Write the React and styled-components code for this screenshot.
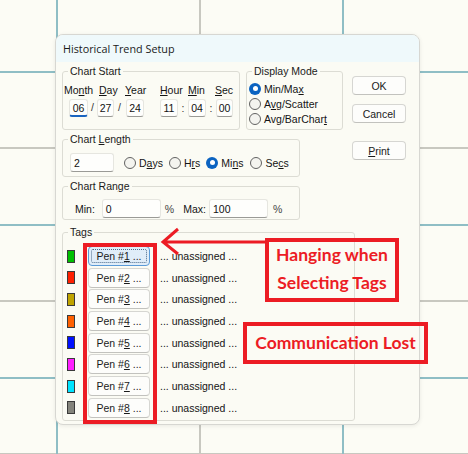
import React from "react";
import styled, { createGlobalStyle, css } from "styled-components";

const GlobalStyle = createGlobalStyle`
  html, body { margin: 0; padding: 0; background: #fcfcf5; }
  body { font-family: "Liberation Sans", Arial, sans-serif; }
`;

const TEAL = "#8fbec5";
const GRAY = "#c8c8c0";
const RED = "#ec1c24";

const Desktop = styled.div`
  position: relative;
  width: 468px;
  height: 454px;
  overflow: hidden;
  box-sizing: border-box;
  padding: 34px 0 0 55px;
  background-color: #fcfcf5;
  background-image:
    repeating-linear-gradient(90deg, transparent 0 56px, ${TEAL} 56px 58px, transparent 58px 286px),
    repeating-linear-gradient(90deg, transparent 0 199px, ${GRAY} 199px 201px, transparent 201px 286px),
    repeating-linear-gradient(180deg, transparent 0 71px, ${TEAL} 71px 73px, transparent 73px 153px),
    repeating-linear-gradient(180deg, transparent 0 147px, ${GRAY} 147px 149px, transparent 149px 153px);
`;

const Dialog = styled.div`
  width: 365px;
  box-sizing: border-box;
  border: 1px solid #d7d7d2;
  border-radius: 8px;
  background: #fbfbf4;
  overflow: hidden;
  box-shadow: 0 1px 4px rgba(0, 0, 0, 0.08);
  font-size: 10.5px;
  color: #141414;
`;

const TitleBar = styled.div`
  height: 27px;
  display: flex;
  align-items: center;
  padding-left: 7px;
  background: #eff9fb;
  font-family: "Open Sans", "Noto Sans", sans-serif;
  font-size: 10.8px;
  color: #1a1a1a;
`;

const Body = styled.div`
  padding: 3px 6px 3px 6px;
`;

const TopSection = styled.div`
  display: flex;
  align-items: flex-start;
`;

const MainCol = styled.div`
  width: 281px;
  display: flex;
  flex-direction: column;
`;

const TopRow = styled.div`
  display: flex;
  gap: 6px;
`;

const ButtonCol = styled.div`
  margin: 11px 0 0 9px;
  display: flex;
  flex-direction: column;
`;

const Group = styled.fieldset`
  margin: ${(p) => p.$mt || 0}px 0 0 0;
  padding: 0;
  min-width: 0;
  width: ${(p) => p.$w}px;
  box-sizing: border-box;
  border: 1px solid #dcdcd4;
  border-radius: 3px;
`;

const Legend = styled.legend`
  margin-left: 5px;
  padding: 0 2px;
  line-height: 13px;
  font-size: 10.5px;
  color: #1a1a1a;
`;

const Acc = styled.span`
  text-decoration: underline;
  text-underline-offset: 1px;
`;

const DateGrid = styled.div`
  display: grid;
  grid-template-columns: 5px 19px 9px 17px 11px 18px 17px 18px 10px 18px 10px 17px;
  grid-template-rows: 13px 18px;
  row-gap: 2px;
  align-items: center;
  padding: 6px 0 12px 1px;
`;

const DateLabel = styled.span`
  grid-row: 1;
  grid-column: ${(p) => p.$col};
  margin-left: ${(p) => p.$ml || 0}px;
  white-space: nowrap;
  line-height: 13px;
`;

const Sep = styled.span`
  grid-row: 2;
  grid-column: ${(p) => p.$col};
  text-align: center;
  color: #333;
  ${(p) => p.$slash && css`align-self: start; padding-top: 2px;`}
`;

const Field = styled.div`
  grid-row: 2;
  grid-column: ${(p) => p.$col || "auto"};
  width: ${(p) => p.$w}px;
  height: ${(p) => p.$h || 18}px;
  margin-left: ${(p) => p.$ml || 0}px;
  box-sizing: border-box;
  display: flex;
  align-items: center;
  justify-content: ${(p) => (p.$center ? "center" : "flex-start")};
  padding-left: ${(p) => (p.$center ? 0 : 3)}px;
  background: #fefefc;
  border: 1px solid #e6e6e0;
  border-bottom: ${(p) => (p.$focus ? "2px solid #1a64c0" : "1px solid #9a9a96")};
  border-radius: 3px;
  color: #111;
`;

const RadioList = styled.div`
  display: flex;
  flex-direction: column;
  padding: 3px 0 0 2px;
`;

const RadioItem = styled.div`
  display: flex;
  align-items: center;
  height: 15px;
  margin-left: ${(p) => p.$ml || 0}px;
  white-space: nowrap;
`;

const RadioCircle = styled.span`
  flex: none;
  width: 12px;
  height: 12px;
  margin-right: 3px;
  border-radius: 50%;
  box-sizing: border-box;
  ${(p) =>
    p.$on
      ? css`
          background: #0b63c1;
          display: flex;
          align-items: center;
          justify-content: center;
          &::after {
            content: "";
            width: 5px;
            height: 5px;
            border-radius: 50%;
            background: #fff;
          }
        `
      : css`
          border: 1px solid #626262;
          background: #f4f4ef;
        `}
`;

const InlineRow = styled.div`
  display: flex;
  align-items: center;
  height: 19px;
  padding: ${(p) => p.$pad};
  white-space: nowrap;
`;

const Text = styled.span`
  margin-left: ${(p) => p.$ml || 0}px;
  color: ${(p) => p.$color || "inherit"};
`;

const Button = styled.div`
  width: ${(p) => p.$w || 54}px;
  height: ${(p) => p.$h || 19}px;
  margin-top: ${(p) => p.$mt || 0}px;
  margin-left: ${(p) => p.$ml || 0}px;
  box-sizing: border-box;
  display: flex;
  align-items: center;
  justify-content: center;
  flex: none;
  border-radius: 4px;
  color: #1a1a1a;
  position: relative;
  ${(p) =>
    p.$focus
      ? css`
          background: #e0edf9;
          border: 1px solid #5a9ad8;
          &::after {
            content: "";
            position: absolute;
            inset: 2px;
            border: 1px dotted #4a6a8a;
            border-radius: 2px;
          }
        `
      : css`
          background: #fdfdfb;
          border: 1px solid #d6d6d2;
          border-bottom-color: #c2c2be;
        `}
`;

const TagList = styled.div`
  display: flex;
  flex-direction: column;
  gap: 1.7px;
  padding: 7px 0 2px 4px;
`;

const TagRow = styled.div`
  display: flex;
  align-items: center;
  height: 20px;
  white-space: nowrap;
`;

const Swatch = styled.span`
  width: 8px;
  height: 13px;
  box-sizing: border-box;
  border: 1px solid #3a3a3a;
  background: ${(p) => p.$c};
  flex: none;
`;

const Callout = styled.div`
  position: absolute;
  left: ${(p) => p.$x}px;
  top: ${(p) => p.$y}px;
  width: ${(p) => p.$w}px;
  height: ${(p) => p.$h}px;
  box-sizing: border-box;
  border: 4px solid ${RED};
  display: flex;
  flex-direction: column;
  align-items: center;
  justify-content: center;
  font-family: Lato, "Open Sans", sans-serif;
  font-weight: 700;
  font-size: 17.5px;
  line-height: 28px;
  color: ${RED};
  padding-bottom: ${(p) => p.$pb || 0}px;
`;

const ArrowSvg = styled.svg`
  position: absolute;
  left: 158px;
  top: 225px;
  overflow: visible;
`;

const pens = [
  { c: "#00c000", n: "1" },
  { c: "#ff2000", n: "2" },
  { c: "#c0a400", n: "3" },
  { c: "#ff6000", n: "4" },
  { c: "#0010ff", n: "5" },
  { c: "#ff20ff", n: "6" },
  { c: "#00e4ff", n: "7" },
  { c: "#84847c", n: "8" },
];

export default function App() {
  return (
    <>
      <GlobalStyle />
      <Desktop>
        <Dialog>
          <TitleBar>Historical Trend Setup</TitleBar>
          <Body>
            <TopSection>
              <MainCol>
                <TopRow>
                  <Group $w={178}>
                    <Legend>Chart Start</Legend>
                    <DateGrid>
                      <DateLabel $col="1 / 4">
                        Mo<Acc>n</Acc>th
                      </DateLabel>
                      <DateLabel $col="4 / 6" $ml={2}>
                        <Acc>D</Acc>ay
                      </DateLabel>
                      <DateLabel $col="6 / 8">
                        <Acc>Y</Acc>ear
                      </DateLabel>
                      <DateLabel $col="8 / 10">
                        <Acc>H</Acc>our
                      </DateLabel>
                      <DateLabel $col="10 / 12">
                        <Acc>M</Acc>in
                      </DateLabel>
                      <DateLabel $col="12 / 13" $ml={-1}>
                        <Acc>S</Acc>ec
                      </DateLabel>
                      <Field $col="2" $w={19} $center $focus>06</Field>
                      <Sep $col="3" $slash>/</Sep>
                      <Field $col="4" $w={17} $center>27</Field>
                      <Sep $col="5" $slash>/</Sep>
                      <Field $col="6" $w={18} $ml={1} $center>24</Field>
                      <Field $col="8" $w={18} $center>11</Field>
                      <Sep $col="9">:</Sep>
                      <Field $col="10" $w={18} $center>04</Field>
                      <Sep $col="11">:</Sep>
                      <Field $col="12" $w={17} $center>00</Field>
                    </DateGrid>
                  </Group>
                  <Group $w={97}>
                    <Legend>Display Mode</Legend>
                    <RadioList>
                      <RadioItem>
                        <RadioCircle $on />
                        <span>
                          Min/Ma<Acc>x</Acc>
                        </span>
                      </RadioItem>
                      <RadioItem>
                        <RadioCircle />
                        <span>
                          A<Acc>v</Acc>g/Scatter
                        </span>
                      </RadioItem>
                      <RadioItem>
                        <RadioCircle />
                        <span>
                          Avg/BarChar<Acc>t</Acc>
                        </span>
                      </RadioItem>
                    </RadioList>
                  </Group>
                </TopRow>

                <Group $w={238} $mt={3}>
                  <Legend>
                    Chart <Acc>L</Acc>ength
                  </Legend>
                  <InlineRow $pad="7px 0 4px 7px">
                    <Field $w={44} $h={19}>2</Field>
                    <RadioItem $ml={10}>
                      <RadioCircle />
                      <span>
                        D<Acc>a</Acc>ys
                      </span>
                    </RadioItem>
                    <RadioItem $ml={6}>
                      <RadioCircle />
                      <span>
                        H<Acc>r</Acc>s
                      </span>
                    </RadioItem>
                    <RadioItem $ml={6}>
                      <RadioCircle $on />
                      <span>
                        Mi<Acc>n</Acc>s
                      </span>
                    </RadioItem>
                    <RadioItem $ml={7}>
                      <RadioCircle />
                      <span>
                        Se<Acc>c</Acc>s
                      </span>
                    </RadioItem>
                  </InlineRow>
                </Group>

                <Group $w={238} $mt={3}>
                  <Legend>
                    Chart Ran<Acc>g</Acc>e
                  </Legend>
                  <InlineRow $pad="6px 0 1px 12px">
                    <Text>Min:</Text>
                    <Field $w={59} $h={19} $ml={7}>0</Field>
                    <Text $ml={4} $color="#444">%</Text>
                    <Text $ml={9}>Max:</Text>
                    <Field $w={59} $h={19} $ml={3}>100</Field>
                    <Text $ml={5} $color="#444">%</Text>
                  </InlineRow>
                </Group>
              </MainCol>

              <ButtonCol>
                <Button>OK</Button>
                <Button $mt={9}>Cancel</Button>
                <Button $mt={18}>
                  <Acc>P</Acc>rint
                </Button>
              </ButtonCol>
            </TopSection>

            <Group $w={293} $mt={6}>
              <Legend>Tags</Legend>
              <TagList>
                {pens.map((p, i) => (
                  <TagRow key={p.n}>
                    <Swatch $c={p.c} />
                    <Button $w={62} $h={20} $ml={13} $focus={i === 0}>
                      Pen #<Acc>{p.n}</Acc>&nbsp;...
                    </Button>
                    <Text $ml={10}>... unassigned ...</Text>
                  </TagRow>
                ))}
              </TagList>
            </Group>
          </Body>
        </Dialog>

        <Callout $x={83} $y={243} $w={74} $h={181} />
        <ArrowSvg width="110" height="32" viewBox="0 0 110 32">
          <path
            d="M20 4 L5 17 L20 29 M5 17 L108 17"
            fill="none"
            stroke={RED}
            strokeWidth="3"
          />
        </ArrowSvg>
        <Callout $x={265} $y={238} $w={134} $h={64} $pb={2}>
          <span>Hanging when</span>
          <span>Selecting Tags</span>
        </Callout>
        <Callout $x={243} $y={322} $w={185} $h={42}>
          <span>Communication Lost</span>
        </Callout>
      </Desktop>
    </>
  );
}
